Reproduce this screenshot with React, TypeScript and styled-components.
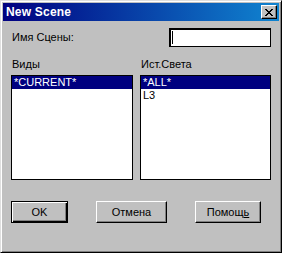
import React from 'react';
import styled, { createGlobalStyle } from 'styled-components';

const GlobalStyle = createGlobalStyle`
  html, body {
    margin: 0;
    padding: 0;
    background: #c0c0c0;
  }
  * {
    box-sizing: border-box;
  }
`;

const Window = styled.div`
  width: 282px;
  height: 253px;
  background: #c0c0c0;
  border: 1px solid;
  border-color: #dfdfdf #000 #000 #dfdfdf;
  box-shadow: inset 1px 1px 0 #fff, inset -1px -1px 0 #808080;
  padding: 2px 2px 2px 2px;
  display: flex;
  flex-direction: column;
  font-family: 'Liberation Sans', Arial, sans-serif;
  font-size: 11px;
  color: #000;
`;

const TitleBar = styled.div`
  height: 18px;
  background: linear-gradient(90deg, #000080 0%, #1084d0 100%);
  display: flex;
  align-items: center;
  justify-content: space-between;
  padding: 0 2px 0 3px;
`;

const Title = styled.span`
  color: #fff;
  font-weight: bold;
  font-size: 12px;
  letter-spacing: 0.2px;
`;

const CloseButton = styled.button`
  width: 16px;
  height: 14px;
  padding: 0;
  background: #c0c0c0;
  border: 1px solid;
  border-color: #fff #000 #000 #fff;
  box-shadow: inset -1px -1px 0 #808080;
  display: flex;
  align-items: center;
  justify-content: center;
`;

const Body = styled.div`
  flex: 1;
  display: flex;
  flex-direction: column;
  padding: 7px 8px 0 8px;
`;

const NameRow = styled.div`
  display: flex;
  align-items: center;
  justify-content: space-between;
  height: 19px;
`;

const Label = styled.label`
  padding-left: 1px;
  line-height: 13px;
`;

const NameInput = styled.div`
  width: 102px;
  height: 19px;
  background: #fff;
  border: 1px solid #000;
  box-shadow: inset 1px 1px 0 #000;
  padding: 3px 2px;
  display: flex;
  align-items: center;
`;

const Caret = styled.span`
  width: 1px;
  height: 13px;
  background: #000;
`;

const Lists = styled.div`
  display: flex;
  gap: 7px;
  margin-top: 11px;
`;

const Column = styled.div<{ $width: number }>`
  width: ${(p) => p.$width}px;
  display: flex;
  flex-direction: column;
`;

const ColumnLabel = styled(Label)`
  height: 13px;
  margin-bottom: 4px;
  display: block;
`;

const ListBox = styled.div`
  height: 105px;
  background: #fff;
  border: 1px solid #000;
  display: flex;
  flex-direction: column;
`;

const Item = styled.div<{ $selected?: boolean }>`
  height: 13px;
  line-height: 13px;
  padding-left: 2px;
  background: ${(p) => (p.$selected ? '#000080' : 'transparent')};
  color: ${(p) => (p.$selected ? '#fff' : '#000')};
  white-space: nowrap;
`;

const Buttons = styled.div`
  display: flex;
  gap: 28px;
  margin-top: 21px;
`;

const Button = styled.button<{ $width: number; $default?: boolean }>`
  width: ${(p) => p.$width}px;
  height: 22px;
  padding: 0;
  background: #c0c0c0;
  font-family: 'Liberation Sans', Arial, sans-serif;
  font-size: 11px;
  color: #000;
  border: 1px solid;
  border-color: ${(p) => (p.$default ? '#000' : '#fff #000 #000 #fff')};
  box-shadow: ${(p) =>
    p.$default
      ? 'inset 1px 1px 0 #fff, inset -1px -1px 0 #000, inset -2px -2px 0 #808080'
      : 'inset -1px -1px 0 #808080'};

  u {
    text-decoration: underline;
  }
`;

export default function App() {
  return (
    <>
      <GlobalStyle />
      <Window>
        <TitleBar>
          <Title>New Scene</Title>
          <CloseButton aria-label="Close">
            <svg width="8" height="7" viewBox="0 0 8 7">
              <path
                d="M0 0h2v1h1v1h2V1h1V0h2v1H7v1H6v1H5v1h1v1h1v1h1v1H6V6H5V5H3v1H2v1H0V6h1V5h1V4h1V3H2V2H1V1H0z"
                fill="#000"
              />
            </svg>
          </CloseButton>
        </TitleBar>
        <Body>
          <NameRow>
            <Label>Имя Сцены:</Label>
            <NameInput>
              <Caret />
            </NameInput>
          </NameRow>
          <Lists>
            <Column $width={122}>
              <ColumnLabel>Виды</ColumnLabel>
              <ListBox>
                <Item $selected>*CURRENT*</Item>
              </ListBox>
            </Column>
            <Column $width={131}>
              <ColumnLabel>Ист.Света</ColumnLabel>
              <ListBox>
                <Item $selected>*ALL*</Item>
                <Item>L3</Item>
              </ListBox>
            </Column>
          </Lists>
          <Buttons>
            <Button $width={57} $default>
              OK
            </Button>
            <Button $width={71}>Отмена</Button>
            <Button $width={66}>
              Помощ<u>ь</u>
            </Button>
          </Buttons>
        </Body>
      </Window>
    </>
  );
}
